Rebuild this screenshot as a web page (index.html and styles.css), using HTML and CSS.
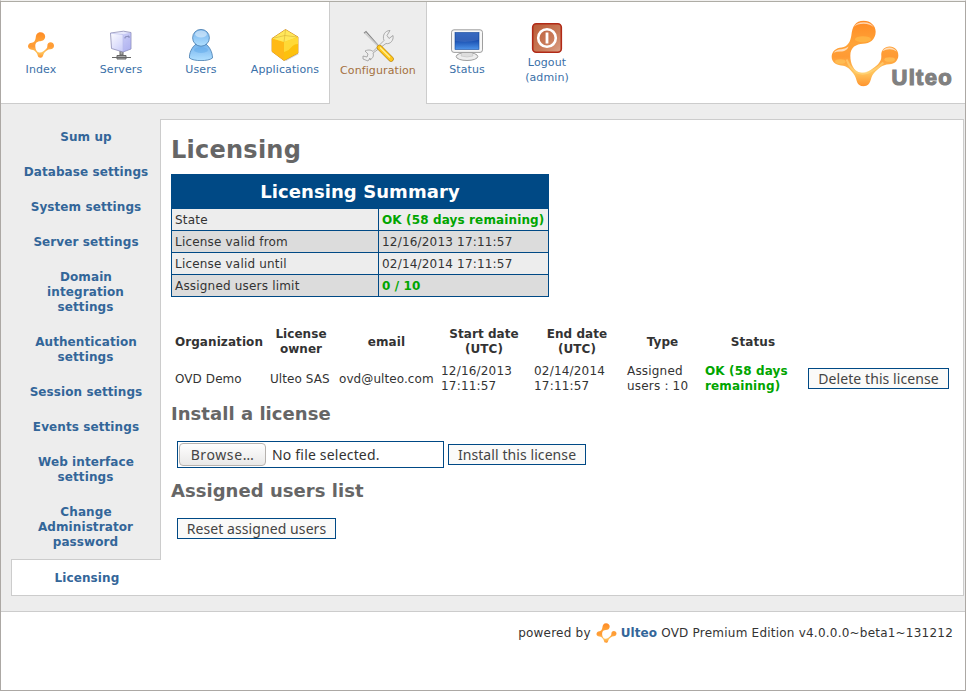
FILE: index.html
```html
<!DOCTYPE html>
<html lang="en">
<head>
<meta charset="utf-8">
<title>Licensing</title>
<link rel="stylesheet" href="styles.css">
</head>
<body>
<svg class="defs" aria-hidden="true">
  <defs>
    <linearGradient id="orange" x1="0" y1="0" x2="0" y2="1">
      <stop offset="0" stop-color="#ff8a24"/><stop offset=".35" stop-color="#ffa338"/><stop offset=".55" stop-color="#ff9a34"/><stop offset=".8" stop-color="#ffc45c"/><stop offset="1" stop-color="#ff942e"/>
    </linearGradient>
    <symbol id="ulteo" viewBox="62 58 204 200">
      <path fill="url(#orange)" d="M160 60c20 0 36 14 36 33 0 23-18 36-38 36-20 1-38 10-38 36 0 24 10 46 29 50 10 3 22-1 31-7 17-11 34-24 33-42-2-18 10-29 25-29s26 11 26 26c0 16-11 26-27 27-22 1-35 14-47 28-12 13-6 38-30 38-23 0-19-19-27-32-12-18-23-29-41-30-17-2-28-11-28-26 0-16 13-27 30-28 18-2 26-17 29-36 3-27 12-44 37-44z"/>
    </symbol>
  </defs>
</svg>
<div class="page">
  <header class="header">
    <nav class="nav">
      <a class="tab"><svg class="icon" viewBox="0 0 32 32"><use href="#ulteo" x="2.500" y="3" width="27" height="26"/></svg>Index</a>
      <a class="tab"><svg class="icon" viewBox="0 0 32 32">
        <defs><linearGradient id="srv" x2="1" y2="1"><stop offset="0" stop-color="#fff"/><stop offset=".55" stop-color="#dadcfb"/><stop offset="1" stop-color="#b9bcf2"/></linearGradient></defs>
        <path d="M15 22h3v4h-3zM7 28.500h19M12 26.500h9v3.500h-9z" fill="#aaa" stroke="#666"/>
        <path d="M5.500 4l13-1.800 7.500 1.300v16.500l-8 3-11.500-3.500z" fill="url(#srv)" stroke="#8d8db5" stroke-width=".8"/>
        <path d="M18 5.500l8-2v16.500l-8 3z" fill="#9296e7" opacity=".35"/><path d="M6 4.200l12 1.300v17" fill="none" stroke="#b6b9ea" stroke-width=".6"/>
        <path d="M20 9.500v-1.500l4-1v2" stroke="#777ca8" stroke-width=".8" fill="none"/>
      </svg>Servers</a>
      <a class="tab"><svg class="icon" viewBox="0 0 32 32">
        <defs><linearGradient id="usr" x2="0" y2="1"><stop offset="0" stop-color="#72b1ea"/><stop offset=".5" stop-color="#91c8f6"/><stop offset="1" stop-color="#b1e0ff"/></linearGradient></defs>
        <path d="M11 15c-4 3-7 9-6.500 14 4 3.500 19 3.500 23 0 0-6-3-11-6.500-14z" fill="url(#usr)" stroke="#457bae" stroke-width=".8"/>
        <circle cx="16" cy="8.800" r="8.400" fill="url(#usr)" stroke="#457bae" stroke-width=".8"/>
        <ellipse cx="16" cy="5" rx="6" ry="3.500" fill="#fff" opacity=".45"/><ellipse cx="16" cy="21" rx="7" ry="3" fill="#4e9ee4" opacity=".35"/>
      </svg>Users</a>
      <a class="tab tab-wide"><svg class="icon" viewBox="0 0 32 32">
        <path d="M4 11v12l13 9 13-7" fill="#999" opacity=".4"/>
        <path d="M16.500.5l12.500 7.500v16l-14 7.500-12-9v-13z" fill="#ffd119" stroke="#c9801a" stroke-width=".8"/>
        <path d="M3 9.500l12 3.500v18.500l-12-9z" fill="#ffb917"/><path d="M15 13l14-5v16l-14 7.500z" fill="#fdc10d"/><path d="M15 13l14-5v7c-7 0-6 6-14 8z" fill="#ffd936"/>
        <path d="M16.500.8l12 7.200-13.500 5-11.500-3.500z" fill="#ffe75a"/><path d="M16.500 1l-1.500 12M5 9l11-2.500 12 1.500" stroke="#d0a630" stroke-width=".5" fill="none"/>
      </svg>Applications</a>
      <a class="tab tab-active"><svg class="icon" viewBox="0 0 32 32">
        <path d="M2 3.200l2-1.700 13 15" fill="none" stroke="#888" stroke-width="1.200"/><path d="M3 3l14 14" stroke="#ccc" stroke-width="1.500"/>
        <path d="M8 28l-2 3 -5-2 0-3 4 1 1-3-3-3c4-2 7-.5 8 .5l11-11c-2-5 1-10 6-10l-3 5 2 3 4-3c1 5-3 9-7 8L11 23c1 3 0 5-3 7z" fill="#eee" stroke="#999" stroke-width=".8"/>
        <path d="M17.500 17.500l11.500 11.500" stroke="#b8860f" stroke-width="5.400" stroke-linecap="round"/><path d="M17.500 17.500l11.500 11.500" stroke="#ffc71d" stroke-width="4.200" stroke-linecap="round"/><path d="M18 17.500l10 10" stroke="#fff09a" stroke-width="1.200"/>
      </svg>Configuration</a>
      <a class="tab"><svg class="icon" viewBox="0 0 32 32">
        <defs><linearGradient id="scr" x2="0" y2="1"><stop offset="0" stop-color="#1d55b8"/><stop offset=".45" stop-color="#174cae"/><stop offset="1" stop-color="#4d94ea"/></linearGradient></defs>
        <ellipse cx="16" cy="27.500" rx="10.800" ry="4" fill="#eee" stroke="#888" stroke-width=".8"/><path d="M11 23h10l1 4q-6 2-12 0z" fill="#ddd" stroke="#bbb" stroke-width=".5"/>
        <rect x=".5" y=".8" width="31" height="22.600" rx="2.500" fill="#f7f7f7" stroke="#888" stroke-width=".8"/>
        <rect x="4" y="3.500" width="24" height="17" fill="url(#scr)" stroke="#174a9c" stroke-width=".6"/><path d="M4.500 4h23v7q-11 3-23 1z" fill="#fff" opacity=".12"/>
      </svg>Status</a>
      <a class="tab tab-logout"><svg class="icon" viewBox="0 0 32 32">
        <defs><linearGradient id="off" x2="1" y2="1"><stop offset="0" stop-color="#b95a36"/><stop offset=".6" stop-color="#ca7c5a"/><stop offset="1" stop-color="#dda48b"/></linearGradient></defs>
        <rect x="1.700" y="1.700" width="28.600" height="28.600" rx="3.500" fill="url(#off)" stroke="#b12a17" stroke-width="1.600"/>
        <circle cx="16" cy="16" r="8.800" fill="none" stroke="#fff" stroke-width="2.600"/><path d="M16 10.500v11" stroke="#fff" stroke-width="2.800"/>
      </svg>Logout<br>(admin)</a>
    </nav>
    <div class="brand">
      <svg class="brand-mark" viewBox="62 58 204 200">
        <use href="#ulteo" x="62" y="58" width="204" height="200"/>
        <g fill="#fff" opacity=".65"><path d="M130 78q8-14 30-14t31 16q-12-11-31-11t-30 9z"/><path d="M70 156q8-12 23-11 14-1 22-8-6 14-20 15-16-1-25 4z"/><path d="M216 151q8-12 22-11t21 12q-10-7-21-7t-22 6z"/></g>
        <path d="M109 176q14 40 48 43 34-5 62-34" fill="none" stroke="#ffe08a" stroke-width="6" opacity=".5"/>
        <ellipse cx="158" cy="115" rx="24" ry="9" fill="#ffc04d" opacity=".6"/><ellipse cx="90" cy="182" rx="16" ry="7" fill="#ffc95f" opacity=".6"/><ellipse cx="238" cy="176" rx="16" ry="7" fill="#ffc95f" opacity=".6"/>
      </svg>
      <span class="brand-name">Ulteo</span>
    </div>
  </header>
  <main class="main">
    <nav class="side">
      <a class="side-item">Sum up</a>
      <a class="side-item">Database settings</a>
      <a class="side-item">System settings</a>
      <a class="side-item">Server settings</a>
      <a class="side-item">Domain<br>integration<br>settings</a>
      <a class="side-item">Authentication<br>settings</a>
      <a class="side-item">Session settings</a>
      <a class="side-item">Events settings</a>
      <a class="side-item">Web interface<br>settings</a>
      <a class="side-item">Change<br>Administrator<br>password</a>
      <a class="side-item side-active">Licensing</a>
    </nav>
    <section class="content">
      <h1>Licensing</h1>
      <table class="summary">
        <colgroup><col class="c-label"><col></colgroup>
        <thead><tr><th colspan="2">Licensing Summary</th></tr></thead>
        <tbody>
          <tr><td>State</td><td class="ok">OK (58 days remaining)</td></tr>
          <tr><td>License valid from</td><td>12/16/2013 17:11:57</td></tr>
          <tr><td>License valid until</td><td>02/14/2014 17:11:57</td></tr>
          <tr><td>Assigned users limit</td><td class="ok">0 / 10</td></tr>
        </tbody>
      </table>
      <table class="licenses">
        <colgroup><col class="c-org"><col class="c-owner"><col class="c-email"><col class="c-date"><col class="c-date"><col class="c-type"><col class="c-status"><col></colgroup>
        <tr><th class="single">Organization</th><th>License<br>owner</th><th class="single">email</th><th>Start date<br>(UTC)</th><th>End date<br>(UTC)</th><th class="single">Type</th><th class="single">Status</th><th></th></tr>
        <tr><td class="single">OVD Demo</td><td class="single">Ulteo SAS</td><td class="single">ovd@ulteo.com</td><td>12/16/2013<br>17:11:57</td><td>02/14/2014<br>17:11:57</td><td>Assigned<br>users : 10</td><td class="ok">OK (58 days<br>remaining)</td><td><button class="btn btn-delete">Delete this license</button></td></tr>
      </table>
      <h2>Install a license</h2>
      <form class="upload">
        <div class="file"><button type="button" class="browse">Browse…</button><span>No file selected.</span></div>
        <button type="button" class="btn btn-install">Install this license</button>
      </form>
      <h2>Assigned users list</h2>
      <button class="btn btn-reset">Reset assigned users</button>
    </section>
  </main>
  <footer class="footer"><span>powered by</span><svg class="footer-mark"><use href="#ulteo"/></svg><span><b>Ulteo</b> OVD Premium Edition v4.0.0.0~beta1~131212</span></footer>
</div>
</body>
</html>
```
FILE: styles.css
```css
* { box-sizing: border-box; }
body {
  margin: 0;
  font: 12px/15px "DejaVu Sans", sans-serif;
  letter-spacing: .19px;
  color: #333;
  background: #fff;
}
.defs { position: absolute; width: 0; height: 0; }
.page {
  height: 691px;
  border: 1px solid #aca8a4;
  border-top-color: #f2f1f0;
  display: flex;
  flex-direction: column;
}
.header {
  height: 103px;
  flex: none;
  border-top: 1px solid #aeaca5;
  border-bottom: 1px solid #ccc;
  display: flex;
  justify-content: space-between;
}
.nav { display: flex; }
.tab {
  width: 80px;
  height: 101px;
  padding-top: 27px;
  display: flex;
  flex-direction: column;
  align-items: center;
  text-align: center;
  font-size: 11px;
  letter-spacing: .1px;
  color: #3a70a8;
}
.tab-wide { width: 88px; }
.tab-active {
  width: 98px;
  height: 102px;
  background: #ededed;
  border: solid #ccc;
  border-width: 0 1px;
  color: #a4703d;
  padding-top: 28px;
}
.tab-logout { padding-top: 20px; }
.icon { width: 32px; height: 32px; margin-bottom: 1px; flex: none; }
.brand { display: flex; align-items: flex-start; padding: 18px 12px 0 0; }
.brand-mark { width: 68px; height: 67px; margin-left: -1px; }
.brand-name {
  margin: 46px 0 0 -7px;
  font: bold 22px/24px "Liberation Sans", sans-serif;
  letter-spacing: 1.3px;
  color: #808080;
  -webkit-text-stroke: 1.2px #808080;
}
.main {
  flex: none;
  height: 508px;
  padding: 15px 1px 15px 10px;
  background: #ededed;
  border-bottom: 1px solid #ccc;
  display: grid;
  grid-template-columns: 150px 803px;
}
.side { display: flex; flex-direction: column; }
.side-item {
  padding: 11px 0 9px;
  border-right: 1px solid #ccc;
  text-align: center;
  font-weight: bold;
  letter-spacing: .09px;
  text-indent: 1px;
  color: #336699;
}
.side-active {
  flex: 1;
  border: 1px solid #ccc;
  border-right: 0;
  background: #fff;
}
.content {
  background: #fff;
  border: 1px solid #ccc;
  border-left: 0;
  padding: 0 10px;
}
h1, h2 { margin: 0; color: #666; }
h1 { font-size: 24px; line-height: 30px; margin: 15px 0 9px; letter-spacing: .25px; }
h2 { font-size: 18px; line-height: 22px; letter-spacing: .04px; }
.summary { width: 378px; border-collapse: collapse; table-layout: fixed; }
.summary th {
  height: 34px;
  padding: 0;
  background: #004985;
  border: 1px solid #004985;
  color: #fff;
  font-size: 18px;
  letter-spacing: .07px;
}
.summary td { height: 22px; padding: 4px 3px 2px; border: 1px solid #004985; background: #ededed; white-space: nowrap; }
.c-label { width: 207px; }
.summary tr:nth-child(even) td { background: #dcdcdc; }
.ok, .summary .ok { color: #00a500; font-weight: bold; letter-spacing: .13px; }
.licenses { width: 782px; margin: 26px 0 6px 1px; border-collapse: collapse; table-layout: fixed; }
.licenses th, .licenses td { height: 37px; padding: 3px 0 3px 3px; white-space: nowrap; }
.licenses th { padding: 3px 1px 3px 0; letter-spacing: .05px; }
.licenses .single { padding-top: 5px; letter-spacing: .08px; }
.c-org { width: 95px; } .c-owner { width: 69px; } .c-email { width: 102px; }
.c-date { width: 93px; } .c-type { width: 78px; } .c-status { width: 103px; }
.btn {
  display: block;
  height: 21px;
  padding: 0;
  border: 1px solid #004985;
  background: #fafaf9;
  font: 14px/19px "Noto Sans", sans-serif;
  letter-spacing: .08px;
  color: #444;
}
.btn-delete { width: 141px; }
.btn-install { width: 138px; }
.btn-reset { width: 159px; margin: 16px 0 0 6px; }
.upload { display: flex; align-items: center; gap: 4px; margin: 16px 0 12px 6px; }
.file {
  width: 267px;
  height: 27px;
  border: 1px solid #004985;
  padding: 1px;
  display: flex;
  align-items: center;
  gap: 6px;
  font: 14px/20px "Noto Sans", sans-serif;
}
.browse {
  width: 87px;
  height: 23px;
  padding: 0;
  border: 1px solid #b6b2ae;
  border-radius: 4px;
  background: linear-gradient(#fefefe, #e9e8e7);
  font: inherit;
  letter-spacing: .6px;
  color: #444;
}
.footer { display: flex; justify-content: flex-end; padding: 10px 12px 0 0; line-height: 22px; letter-spacing: .22px; }
.footer b { color: #336699; letter-spacing: .1px; }
.footer-mark { width: 21px; height: 20px; margin: 1px 4px 0 5px; }
```
